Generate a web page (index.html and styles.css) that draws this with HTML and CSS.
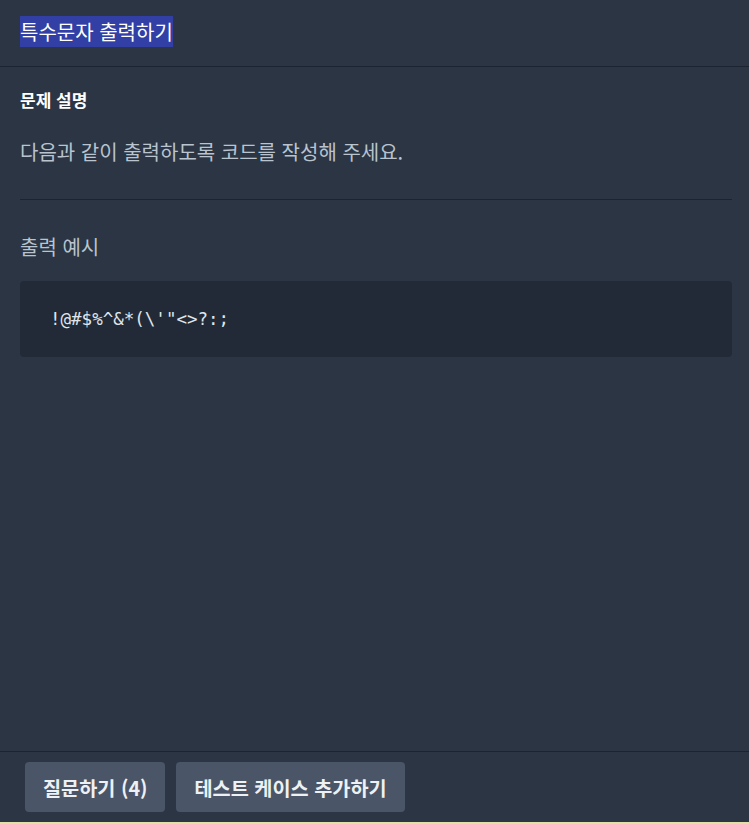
FILE: index.html
```html
<!DOCTYPE html>
<html lang="ko">
<head>
  <meta charset="UTF-8" />
  <meta name="viewport" content="width=device-width, initial-scale=1.0"/>
  <title>특수문자 출력하기</title>
  <link rel="stylesheet" href="styles.css">
</head>
<body>
  <div class="page">
    <header class="lesson-header">
      <h1 class="lesson-title"><span class="selected">특수문자 출력하기</span></h1>
    </header>
    <main class="guide">
      <h5 class="guide-heading">문제 설명</h5>
      <p class="guide-text">다음과 같이 출력하도록 코드를 작성해 주세요.</p>
      <hr class="divider">
      <p class="guide-text example-label">출력 예시</p>
      <pre class="code-block"><code>!@#$%^&amp;*(\'"&lt;&gt;?:;</code></pre>
    </main>
    <footer class="actions">
      <button class="btn">질문하기 (4)</button>
      <button class="btn">테스트 케이스 추가하기</button>
    </footer>
  </div>
</body>
</html>
```

FILE: styles.css
```css
html, body {
  margin: 0;
  height: 100%;
}
body {
  background: #2b3544;
  color: #b9c4cf;
  font-family: "Noto Sans CJK KR", "Noto Sans", sans-serif;
  border-bottom: 2px solid #e3e0a6;
  box-sizing: border-box;
}
.page {
  display: flex;
  flex-direction: column;
  height: 100%;
}
.lesson-header {
  height: 66px;
  border-bottom: 1px solid #1c2431;
  padding: 0 20px;
  box-sizing: content-box;
}
.lesson-title {
  margin: 0;
  padding-top: 16px;
  font-size: 20px;
  font-weight: 400;
  line-height: 31px;
}
.lesson-title .selected {
  display: inline-block;
  background: #3240a6;
  color: #ffffff;
}
.guide {
  flex: 1;
  padding: 0 17px 0 20px;
}
.guide-heading {
  margin: 21px 0 0;
  font-size: 17px;
  font-weight: 700;
  line-height: 24px;
  color: #ffffff;
}
.guide-text {
  margin: 26px 0 0;
  font-size: 20px;
  line-height: 28px;
}
.divider {
  border: none;
  border-top: 1px solid #1c2431;
  margin: 33px 0 0;
}
.example-label {
  margin-top: 33px;
}
.code-block {
  margin: 20px 0 0;
  background: #232a37;
  border-radius: 4px;
  padding: 25px 30px;
  font-family: "DejaVu Sans Mono", "Liberation Mono", monospace;
  font-size: 17.5px;
  line-height: 26px;
  color: #dfe5ea;
}
.actions {
  border-top: 1px solid #1c2431;
  padding: 10px 25px;
  display: flex;
  gap: 11px;
}
.btn {
  height: 50px;
  padding: 0 18px;
  background: #4a5568;
  color: #eef1f4;
  border: none;
  border-radius: 4px;
  font-family: "Noto Sans CJK KR", "Noto Sans", sans-serif;
  font-size: 19.7px;
  font-weight: 700;
  cursor: pointer;
}
```
